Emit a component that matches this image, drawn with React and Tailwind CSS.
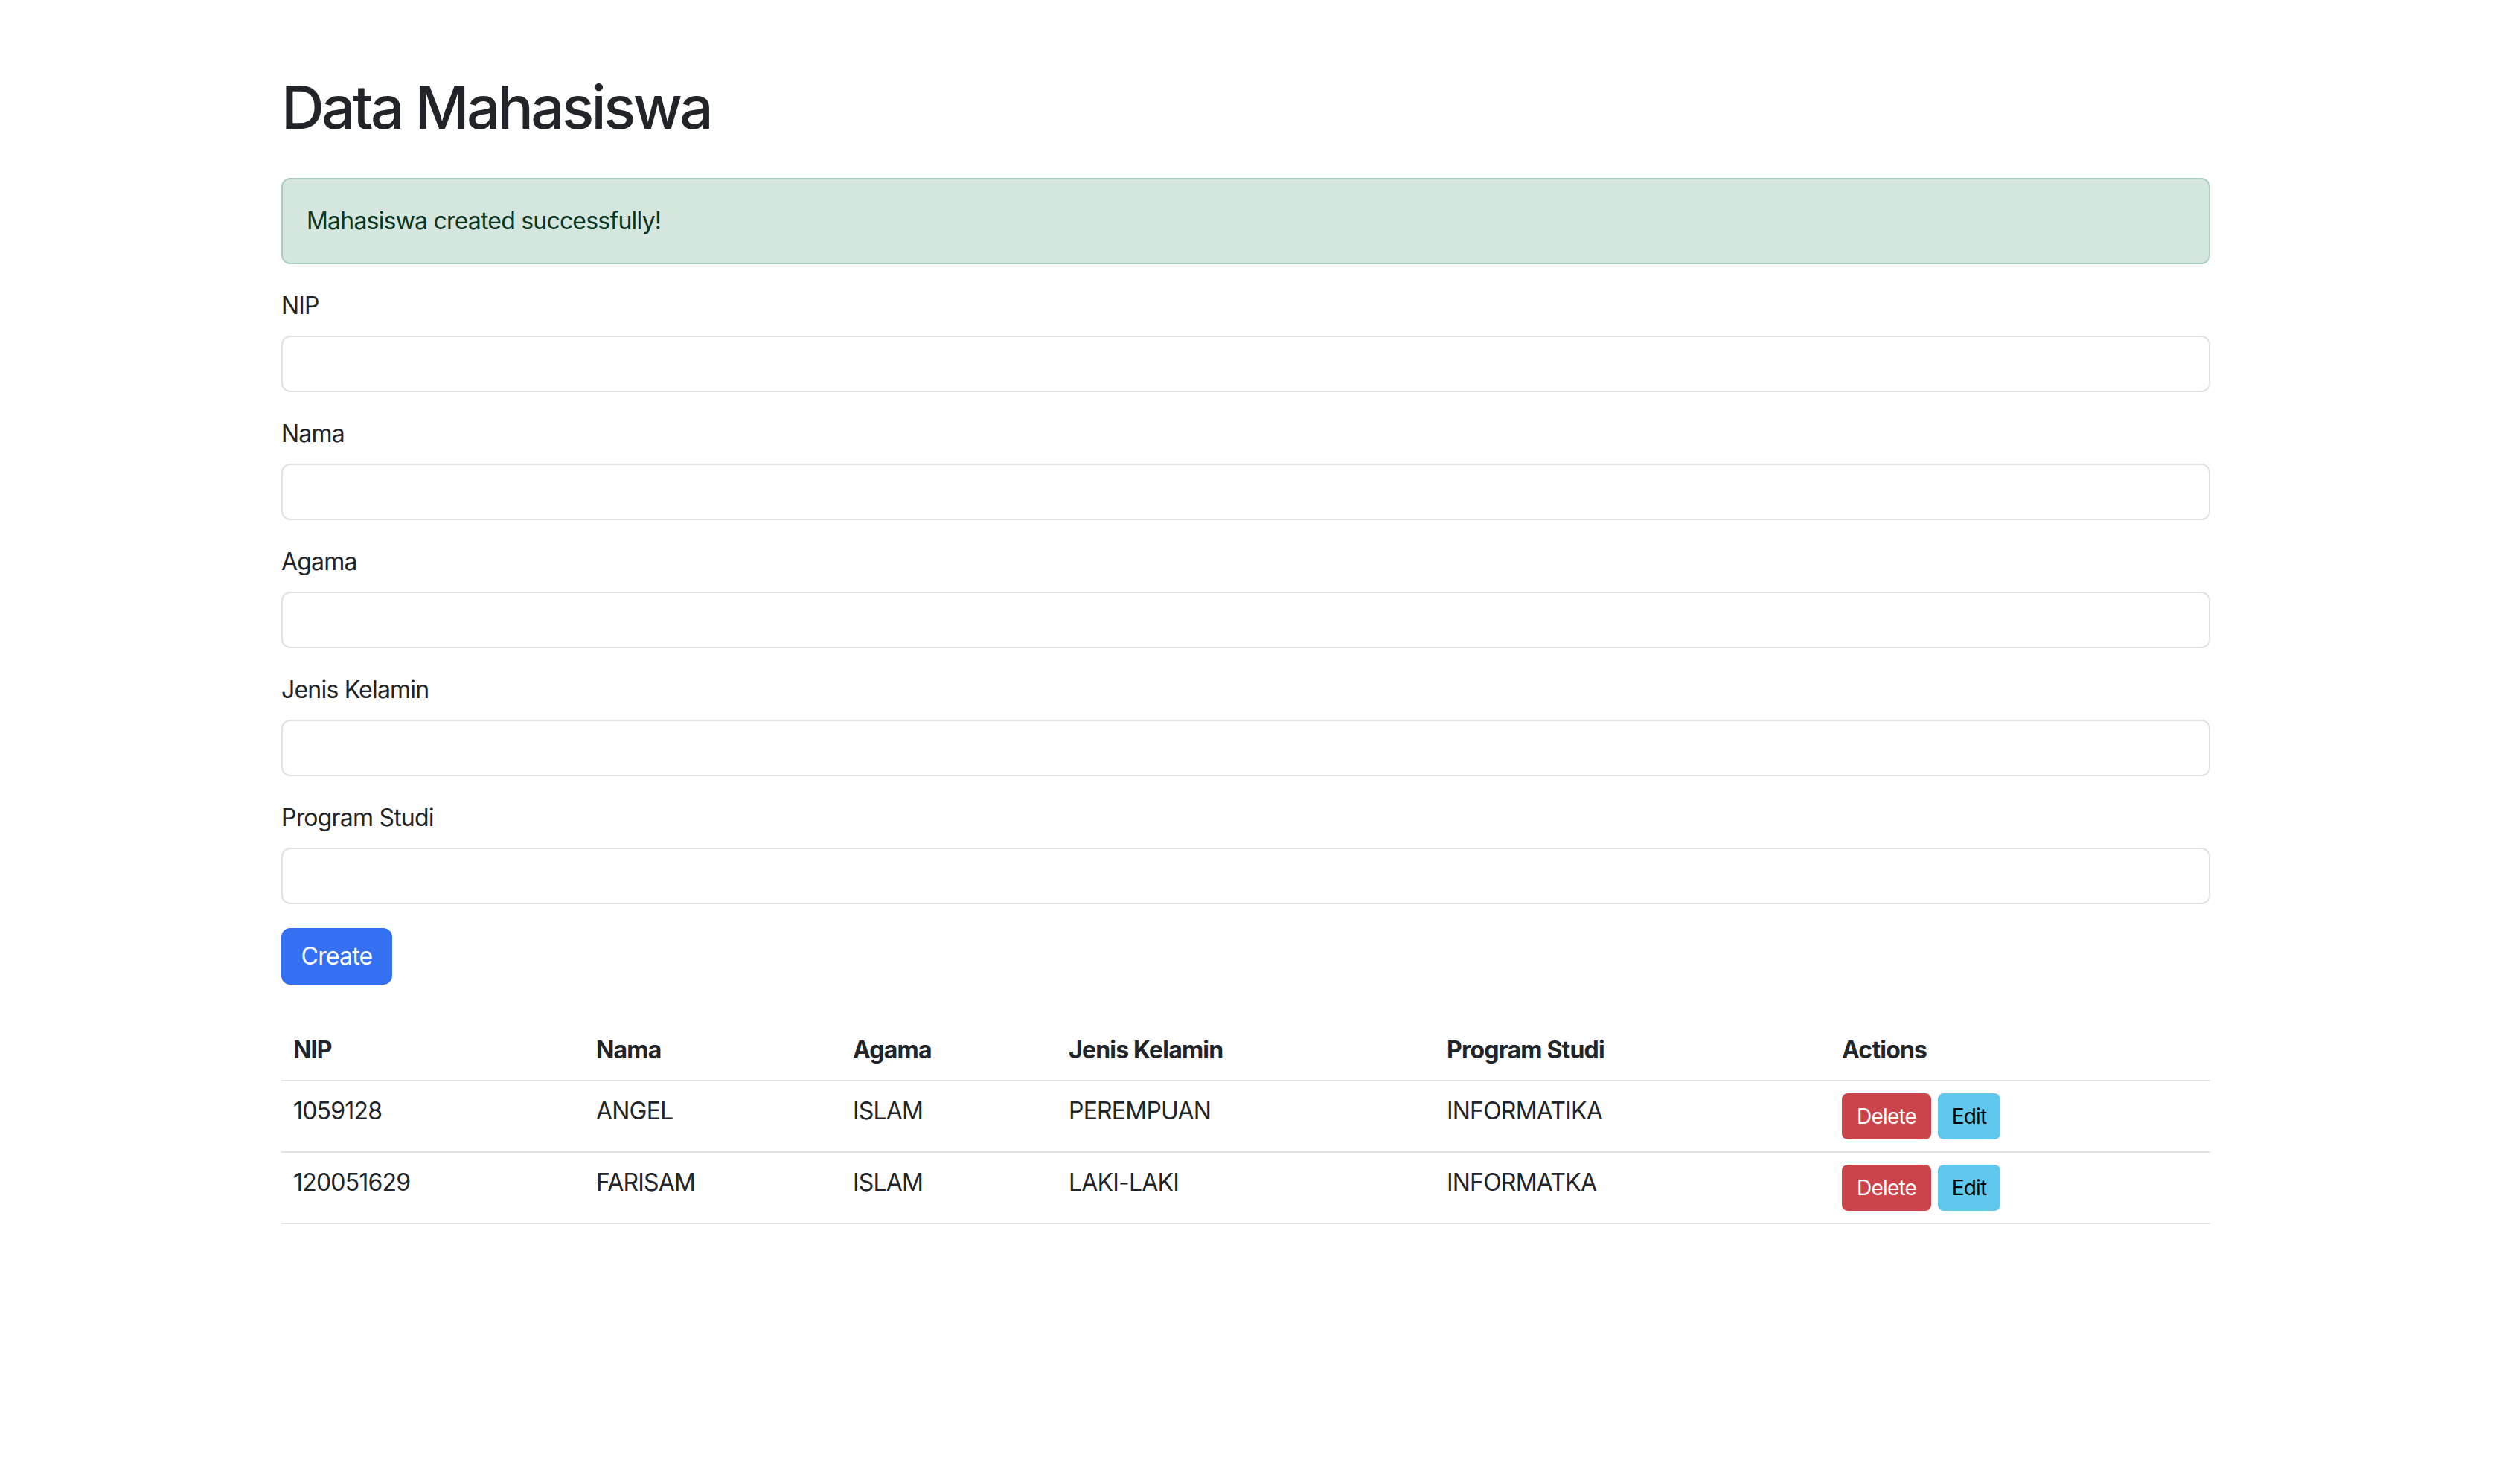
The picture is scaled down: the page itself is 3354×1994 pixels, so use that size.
const fields = ["NIP", "Nama", "Agama", "Jenis Kelamin", "Program Studi"];

const mahasiswa = [
  {
    nip: "1059128",
    nama: "ANGEL",
    agama: "ISLAM",
    jenisKelamin: "PEREMPUAN",
    prodi: "INFORMATIKA",
  },
  {
    nip: "120051629",
    nama: "FARISAM",
    agama: "ISLAM",
    jenisKelamin: "LAKI-LAKI",
    prodi: "INFORMATKA",
  },
];

const FormField = ({ label }) => {
  return (
    <div className="mb-[32px]">
      <label className="block mb-[16px]">{label}</label>
      <input
        type="text"
        className="block w-full h-[76px] px-[24px] rounded-[12px] border-2 border-[#dee2e6] bg-white outline-none"
      />
    </div>
  );
};

const App = () => {
  return (
    <div className="min-h-screen bg-white font-['Inter',sans-serif] text-[32px] leading-[48px] tracking-[-0.8px] text-[#212529]">
      <div className="ml-[378px] w-[2592px] pt-[96px]">
        <h1 className="text-[80px] leading-[96px] font-medium tracking-[-3.6px] mb-[47px]">
          Data Mahasiswa
        </h1>

        {/* Alert */}
        <div className="mb-[32px] rounded-[12px] border-2 border-[#a9cfbd] bg-[#d5e6de] p-[32px] text-[#0a3622]">
          Mahasiswa created successfully!
        </div>

        {/* Form */}
        <form>
          {fields.map((f) => (
            <FormField key={f} label={f} />
          ))}
          <button
            type="button"
            className="h-[76px] w-[149px] rounded-[12px] border-2 border-[#3370f2] bg-[#3370f2] text-white"
          >
            Create
          </button>
        </form>

        {/* Table */}
        <table className="mt-[48px] w-full border-collapse text-left">
          <colgroup>
            <col className="w-[407px]" />
            <col className="w-[345px]" />
            <col className="w-[290px]" />
            <col className="w-[508px]" />
            <col className="w-[531px]" />
            <col />
          </colgroup>
          <thead>
            <tr className="border-b-2 border-[#dee2e6]">
              {["NIP", "Nama", "Agama", "Jenis Kelamin", "Program Studi", "Actions"].map((h) => (
                <th key={h} className="p-[16px] font-bold align-top">
                  {h}
                </th>
              ))}
            </tr>
          </thead>
          <tbody>
            {mahasiswa.map((m) => (
              <tr key={m.nip} className="border-b-2 border-[#dee2e6]">
                <td className="p-[16px] align-top">{m.nip}</td>
                <td className="p-[16px] align-top">{m.nama}</td>
                <td className="p-[16px] align-top">{m.agama}</td>
                <td className="p-[16px] align-top">{m.jenisKelamin}</td>
                <td className="p-[16px] align-top">{m.prodi}</td>
                <td className="p-[16px] align-top">
                  <div className="flex gap-[9px]">
                    <button className="h-[62px] w-[120px] rounded-[8px] bg-[#cc444b] text-white text-[28px] leading-[42px]">
                      Delete
                    </button>
                    <button className="h-[62px] w-[84px] rounded-[8px] bg-[#5fc8ec] text-black text-[28px] leading-[42px]">
                      Edit
                    </button>
                  </div>
                </td>
              </tr>
            ))}
          </tbody>
        </table>
      </div>
    </div>
  );
};

export default App;
